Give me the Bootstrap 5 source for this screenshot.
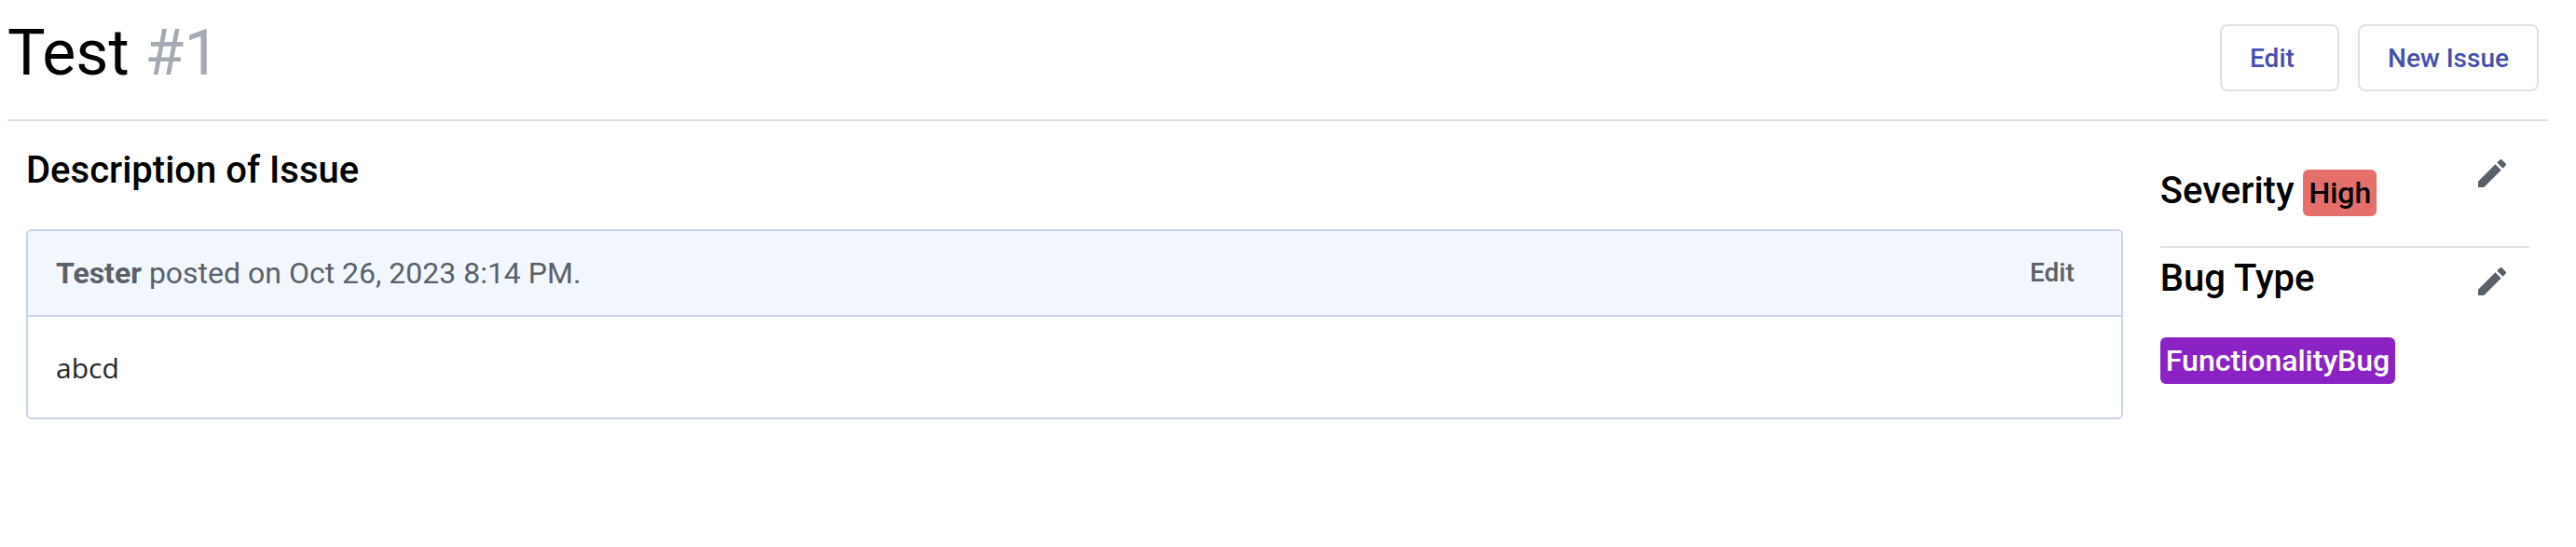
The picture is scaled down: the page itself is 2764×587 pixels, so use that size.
<!DOCTYPE html>
<html lang="en">
<head>
<meta charset="utf-8">
<meta name="viewport" content="width=device-width, initial-scale=1">
<title>Test #1</title>
<link href="https://cdn.jsdelivr.net/npm/bootstrap@5.3.0/dist/css/bootstrap.min.css" rel="stylesheet">
<style>
  body { font-family: Roboto, sans-serif; font-size: 32px; color: #000; background: #fff; }
  .issue-page { padding: 0 30px 0 8px; }
  .issue-header { padding: 26px 10px 30px 0; border-bottom: 2px solid #e0e0e0; }
  .issue-title { font-size: 68px; line-height: 72px; font-weight: 400; margin-top: -5px; }
  .issue-number { color: #a3aab1; }
  .header-actions { gap: 20px; }
  .btn-outline { --bs-btn-color: #464fae; --bs-btn-border-color: #e0e0e0; --bs-btn-hover-color: #464fae; --bs-btn-hover-bg: #f5f5fb; --bs-btn-hover-border-color: #e0e0e0;
    min-width: 128px; padding: 2px 30px 0; border-width: 2px; border-radius: 8px; font-size: 28px; line-height: 66px; font-weight: 500; text-align: left; }
  .issue-main { width: 84%; padding: 29px 20px; }
  .issue-side { width: 16%; padding: 0 20px; }
  .section-title { font-size: 40px; line-height: 48px; font-weight: 500; margin: 0; }
  .comment { --bs-card-border-width: 2px; --bs-card-border-color: #c6d3e9; --bs-card-border-radius: 6px; --bs-card-inner-border-radius: 4px; margin-top: 39px; }
  .comment .card-header { background: #f2f7fe; color: #5b6066; padding: 0 30px; line-height: 90px; }
  .comment .card-body { padding: 33px 30px 31px; font: 30px/44px "Open Sans", sans-serif; color: #24292e; }
  .btn-plain { padding: 0 20px; border: 0; font-size: 28px; line-height: 72px; font-weight: 500; color: #5b6066; }
  .severity { padding: 36px 0 32px; border-bottom: 2px solid #e0e0e0; }
  .severity .section-title { padding-top: 15px; }
  .bug-type { padding-top: 9px; }
  .bug-type .btn-icon { margin-top: 7px; }
  .tag { display: inline-block; padding: 0 6px; border-radius: 6px; font-size: 32px; line-height: 50px; font-weight: 500; }
  .tag-high { background: #e5706b; }
  .tag-bug { background: #8a22c4; color: #fff; margin-top: 39px; }
  .btn-icon { margin-right: 20px; padding: 0; border: 0; color: #586069; line-height: 0; }
</style>
</head>
<body>
<div class="issue-page">
  <header class="issue-header d-flex justify-content-between align-items-start">
    <h1 class="issue-title mb-0">Test <span class="issue-number">#1</span></h1>
    <div class="header-actions d-flex">
      <button type="button" class="btn btn-outline">Edit</button>
      <button type="button" class="btn btn-outline">New Issue</button>
    </div>
  </header>

  <div class="d-flex">
    <main class="issue-main">
      <h2 class="section-title">Description of Issue</h2>
      <article class="card comment">
        <div class="card-header d-flex justify-content-between align-items-center">
          <div><strong>Tester</strong> posted on Oct 26, 2023 8:14 PM.</div>
          <button type="button" class="btn btn-plain">Edit</button>
        </div>
        <div class="card-body">abcd</div>
      </article>
    </main>

    <aside class="issue-side">
      <section class="severity d-flex justify-content-between align-items-start">
        <h2 class="section-title">Severity <span class="tag tag-high">High</span></h2>
        <button type="button" class="btn btn-icon" aria-label="Edit severity">
          <svg width="40" height="40" viewBox="0 0 24 24" fill="currentColor" aria-hidden="true"><path d="M3 17.25V21h3.75L17.81 9.94l-3.75-3.75L3 17.25zM20.71 7.04a.996.996 0 0 0 0-1.41l-2.34-2.34a.996.996 0 0 0-1.41 0l-1.83 1.83 3.75 3.75 1.83-1.83z"/></svg>
        </button>
      </section>
      <section class="bug-type">
        <div class="d-flex justify-content-between align-items-start">
          <h2 class="section-title">Bug Type</h2>
          <button type="button" class="btn btn-icon" aria-label="Edit bug type">
            <svg width="40" height="40" viewBox="0 0 24 24" fill="currentColor" aria-hidden="true"><path d="M3 17.25V21h3.75L17.81 9.94l-3.75-3.75L3 17.25zM20.71 7.04a.996.996 0 0 0 0-1.41l-2.34-2.34a.996.996 0 0 0-1.41 0l-1.83 1.83 3.75 3.75 1.83-1.83z"/></svg>
          </button>
        </div>
        <span class="tag tag-bug">FunctionalityBug</span>
      </section>
    </aside>
  </div>
</div>
<script src="https://cdn.jsdelivr.net/npm/bootstrap@5.3.0/dist/js/bootstrap.bundle.min.js"></script>
</body>
</html>
